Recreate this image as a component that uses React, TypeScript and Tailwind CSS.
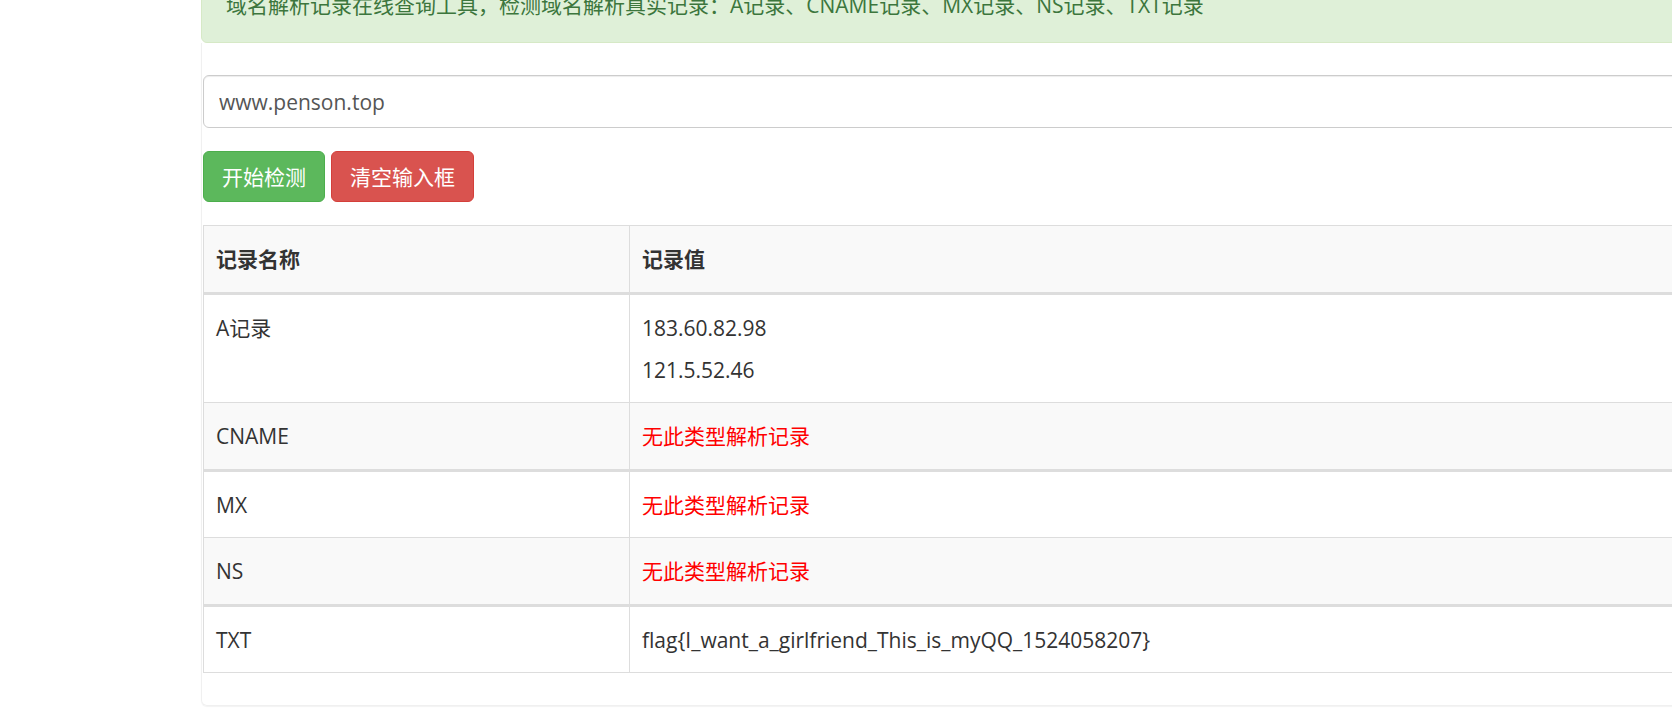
const font = "font-['Open_Sans','Noto_Sans_CJK_SC',sans-serif]";

const rows: { name: string; values: string[]; empty?: boolean; striped?: boolean; thick?: boolean }[] = [
  { name: "A记录", values: ["183.60.82.98", "121.5.52.46"] },
  { name: "CNAME", values: ["无此类型解析记录"], empty: true, striped: true, thick: true },
  { name: "MX", values: ["无此类型解析记录"], empty: true },
  { name: "NS", values: ["无此类型解析记录"], empty: true, striped: true, thick: true },
  { name: "TXT", values: ["flag{I_want_a_girlfriend_This_is_myQQ_1524058207}"] },
];

export default function App() {
  return (
    <div className={`h-[719px] w-[1672px] overflow-hidden bg-white text-[21px] leading-[30px] text-[#333] ${font}`}>
      <div className="-mt-[33px] ml-[201px] w-[1600px]">
        <div className="rounded-[6px] border border-[#d6e9c6] bg-[#dff0d8] px-[24px] py-[22px] text-[#3c763d]">
          域名解析记录在线查询工具，检测域名解析真实记录：A记录、CNAME记录、MX记录、NS记录、TXT记录
        </div>

        <div className="rounded-b-[6px] border-x border-b border-[#f0f0f0] px-px pb-[32px] pt-[32px] shadow-[0_1px_1px_rgba(0,0,0,0.05)]">
          <input
            readOnly
            value="www.penson.top"
            className={`block h-[53px] w-full rounded-[6px] border border-[#ccc] bg-white px-[15px] text-[21px] text-[#555] shadow-[inset_0_1px_1px_rgba(0,0,0,0.075)] outline-none ${font}`}
          />

          <div className="mt-[23px] flex gap-[6px]">
            <button
              type="button"
              className="h-[51px] rounded-[6px] border border-[#4cae4c] bg-[#5cb85c] px-[18px] text-white"
            >
              开始检测
            </button>
            <button
              type="button"
              className="h-[51px] rounded-[6px] border border-[#d43f3a] bg-[#d9534f] px-[18px] text-white"
            >
              清空输入框
            </button>
          </div>

          <table className="mt-[23px] w-full border-collapse text-left">
            <thead>
              <tr className="bg-[#f9f9f9]">
                <th className="w-[426px] border border-b-[3px] border-[#ddd] px-[12px] py-[18px] font-bold">
                  记录名称
                </th>
                <th className="border border-b-[3px] border-[#ddd] px-[12px] py-[18px] font-bold">记录值</th>
              </tr>
            </thead>
            <tbody>
              {rows.map((r) => {
                const cell = `border border-[#ddd] px-[12px] pt-[18px] align-top ${
                  r.thick ? "border-b-[3px] pb-[18px]" : "pb-[17px]"
                }`;
                return (
                  <tr key={r.name} className={r.striped ? "bg-[#f9f9f9]" : "bg-white"}>
                    <td className={cell}>{r.name}</td>
                    <td className={cell}>
                      <div className="flex flex-col gap-[12px]">
                        {r.values.map((v) => (
                          <span key={v} className={r.empty ? "text-[#ff0000]" : ""}>
                            {v}
                          </span>
                        ))}
                      </div>
                    </td>
                  </tr>
                );
              })}
            </tbody>
          </table>
        </div>
      </div>
    </div>
  );
}
